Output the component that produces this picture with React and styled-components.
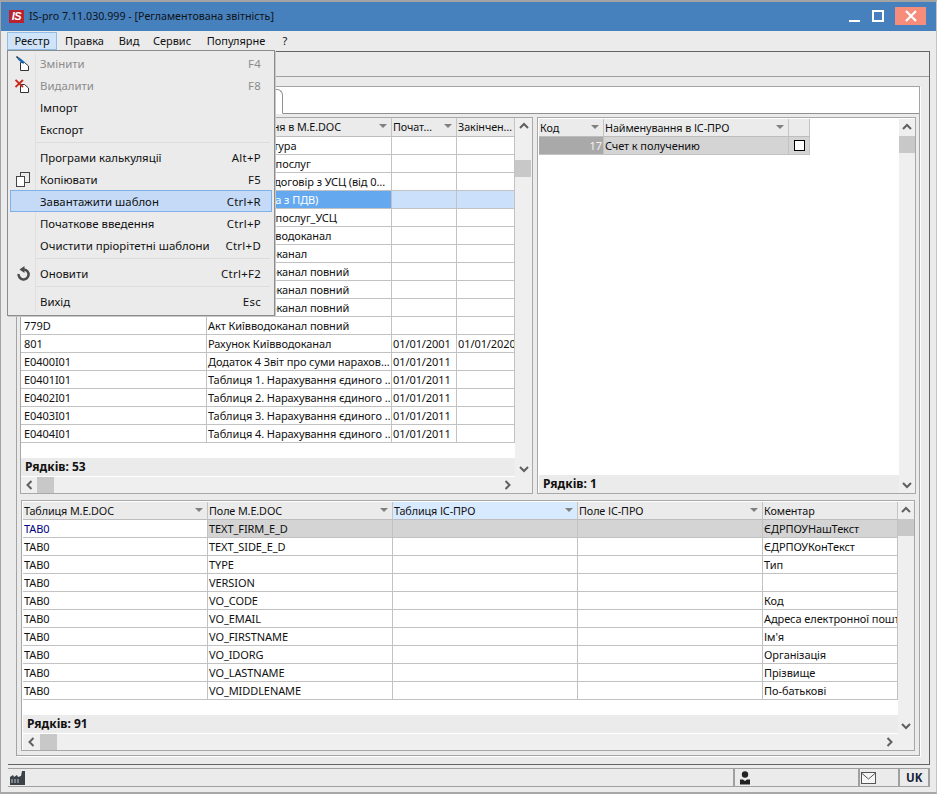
import React from "react";
import styled, { createGlobalStyle } from "styled-components";

const Global = createGlobalStyle`
  html, body { margin: 0; padding: 0; background: #ebebeb; }
  * { box-sizing: border-box; }
  body { font-family: "Noto Sans", "DejaVu Sans", sans-serif; font-size: 11px; color: #111; }
`;

const Window = styled.div`
  width: 937px; height: 794px; background: #ebebeb; overflow: hidden;
  border-top: 2px solid #a3a3a3; border-left: 1px solid #a3a3a3; border-right: 1px solid #c4c4c4; border-bottom: 2px solid #a8a8a8;
  display: flex; flex-direction: column;
`;
const TitleBar = styled.header`
  height: 29px; background: #4681bd; display: flex; align-items: center; padding: 0 10px 1px 8px; flex: none;
`;
const Logo = styled.span`
  width: 15px; height: 13px; background: #b9222e; color: #fff; font: italic 700 11px "Liberation Sans", sans-serif;
  display: flex; align-items: center; justify-content: center; letter-spacing: -0.5px;
`;
const TitleText = styled.span`
  margin-left: 5px; color: #10131a; flex: 1; font-size: 10.7px;
`;
const WinButton = styled.button`
  border: 0; padding: 0; background: ${p => p.$bg || "transparent"}; width: ${p => p.$w}px; height: 18px; margin-left: ${p => p.$ml}px;
  display: flex; align-items: center; justify-content: center;
`;
const MenuBar = styled.nav`
  height: 20px; display: flex; padding: 1px 0 1px 6px; flex: none; position: relative; z-index: 5;
`;
const MenuTitle = styled.div`
  position: relative; height: 18px; line-height: 15px; flex: none; text-align: center;
  width: ${p => p.$w}px;
  border: 1px solid ${p => p.$active ? "#90bde6" : "transparent"};
  background: ${p => p.$active ? "#cfe4f8" : "transparent"};
`;
const Dropdown = styled.div`
  position: absolute; left: -1px; top: 17px; width: 268px; height: 266px; background: #ebebeb; text-align: left;
  border: 1px solid #8c8c8c; padding: 1px 2px 3px 2px; box-shadow: 1px 1px 0 #c8c8c8;
`;
const Gutter = styled.i`
  position: absolute; left: 27px; top: 2px; bottom: 3px; width: 1px; background: #e0e0e0;
`;
const Item = styled.div`
  position: relative; height: 22px; display: flex; align-items: center; padding: 1px 10px 0 29px; justify-content: space-between;
  color: ${p => p.$disabled ? "#8b8b8b" : "#111"};
  background: ${p => p.$hl ? "#c4daf6" : "transparent"};
  border: 1px solid ${p => p.$hl ? "#7fb1e8" : "transparent"};
  font-size: 11.4px;
`;
const ShortKey = styled.span`
  letter-spacing: 0.3px;
`;
const ItemIcon = styled.span`
  position: absolute; left: 4px; top: 2px; width: 17px; height: 17px; display: flex; align-items: center; justify-content: center;
`;
const Separator = styled.div`
  height: 6px; margin-left: 26px; position: relative;
  &::after { content: ""; position: absolute; left: 0; right: 2px; top: 2px; height: 1px; background: #dcdcdc; }
`;
const Frame = styled.main`
  margin-left: 7px; width: 922px; height: 714px; border-top: 1px solid #646464; border-right: 1px solid #646464; border-bottom: 1px solid #646464; flex: none;
`;
const Toolbar = styled.div`
  height: 25px; border-bottom: 1px solid #a0a0a0;
`;
const Page = styled.section`
  margin: 9px 0 0 8px; width: 904px; height: 670px; border: 1px solid #a4a4a4; box-shadow: 1px 1px 0 #fff;
  display: flex; flex-direction: column;
`;
const TabStrip = styled.div`
  height: 27px; background: #fff; border-bottom: 1px solid #909090; flex: none; padding-top: 2px;
`;
const Tab = styled.div`
  width: 266px; height: 25px; background: #fff; border: 1px solid #909090; border-bottom: 1px solid #fff; border-left: 0; border-top-right-radius: 6px;
`;
const Body = styled.div`
  padding: 3px 3px 4px; display: flex; flex-direction: column; gap: 6px;
`;
const TopRow = styled.div`
  display: flex; gap: 4px;
`;
const Panel = styled.div`
  width: ${p => p.$w}px; height: ${p => p.$h}px; border: 1px solid #a8a8a8; padding: ${p => p.$pad || "0"}; margin-left: ${p => p.$ml || 0}px;
  background: #fff; display: flex; flex-direction: column; flex: none;
`;
const PanelMain = styled.div`
  flex: 1; display: flex; min-height: 0;
`;
const TableCol = styled.div`
  flex: 1; min-width: 0; display: flex; flex-direction: column;
`;
const Grow = styled.div`flex: 1; background: ${p => p.$clear ? "transparent" : "#fff"};`;
const Row = styled.div`
  display: flex; height: ${p => p.$h || 18}px; flex: none; overflow: hidden;
`;
const HeadCell = styled.div`
  width: ${p => p.$w}px; flex: none; position: relative; background: ${p => p.$hot ? "#d8eaff" : "#ebebeb"};
  border-right: 1px solid #c4c4c4; border-bottom: 1px solid #bdbdbd; padding: 0 1px; line-height: 18px; white-space: nowrap; overflow: hidden;
  font-size: 10.8px; letter-spacing: -0.1px;
`;
const SortArrow = styled.i`
  position: absolute; right: 4px; top: 6px; width: 0; height: 0;
  border-left: 4px solid transparent; border-right: 4px solid transparent; border-top: 4px solid #808080;
`;
const Cell = styled.div`
  width: ${p => p.$w}px; flex: none; padding: 0 1px 0 ${p => p.$pl || 1}px; line-height: 18px; white-space: nowrap; overflow: hidden;
  border-right: 1px solid #c2c2c2; border-bottom: 1px solid #c2c2c2; letter-spacing: -0.08px;
  text-align: ${p => p.$right ? "right" : "left"};
  background: ${p => ({ sel: "#64a9f0", selLight: "#cbe1fb", cur: "#d4d4d4", key: "#a9a9a9" }[p.$tone] || "#fff")};
  color: ${p => ({ sel: "#fff", key: "#f2f2f2", navy: "#000080" }[p.$tone] || "#111")};
`;
const CheckCell = styled(Cell)`
  display: flex; align-items: center; justify-content: center; padding: 0;
`;
const Check = styled.span`
  width: 11px; height: 11px; border: 1px solid #000; background: #fff; display: block;
`;
const Footer = styled.div`
  height: 18px; flex: none; background: #ebebeb; font-weight: 700; font-size: 12px; line-height: 18px; padding-left: ${p => p.$pl}px;
  margin-bottom: ${p => p.$mb || 0}px; color: #111;
`;
const VScroll = styled.div`
  width: ${p => p.$w}px; flex: none; background: #efefef; display: flex; flex-direction: column; align-items: stretch;
`;
const Thumb = styled.div`
  height: 17px; background: #c8c8c8; margin-top: ${p => p.$top}px; margin-right: ${p => p.$mr || 0}px;
`;
const ArrowBox = styled.div`
  height: 17px; flex: none; display: flex; align-items: center; justify-content: center;
`;
const HScroll = styled.div`
  height: 16px; flex: none; background: #efefef; display: flex; align-items: center; padding-left: ${p => p.$pl}px; padding-right: ${p => p.$pr}px;
`;
const HThumb = styled.div`
  width: 17px; height: 16px; background: #c8c8c8; margin-left: ${p => p.$ml}px;
`;
const StatusBar = styled.footer`
  margin: 3px 0 0 7px; width: 922px; height: 19px; display: flex; border-top: 1px solid #a0a0a0; border-bottom: 1px solid #a0a0a0; flex: none;
`;
const StatusCell = styled.div`
  width: ${p => p.$w ? `${p.$w}px` : "auto"}; flex: ${p => p.$w ? "none" : 1}; display: flex; align-items: center; padding-left: ${p => p.$pl || 0}px;
  border-right: ${p => p.$w ? "2px solid #a0a0a0" : "0"}; border-left: ${p => p.$bl ? "2px solid #a0a0a0" : "0"};
`;
const Lang = styled.b`
  font: 700 11.5px "Noto Sans", sans-serif; color: #16233a;
`;

const Chevron = ({ dir }) => {
  const d = { up: "M1 6 L5 2 L9 6", down: "M1 3 L5 7 L9 3", left: "M6.5 1 L2.5 5 L6.5 9", right: "M3.5 1 L7.5 5 L3.5 9" }[dir];
  return <svg width="10" height="10" viewBox="0 0 10 10"><path d={d} fill="none" stroke="#606060" strokeWidth="2" /></svg>;
};
const VBar = ({ w, top, mr }) => (
  <VScroll $w={w}>
    <ArrowBox><Chevron dir="up" /></ArrowBox>
    <Thumb $top={top} $mr={mr} />
    <Grow $clear />
    <ArrowBox><Chevron dir="down" /></ArrowBox>
  </VScroll>
);
const HBar = ({ pl, ml, pr }) => (
  <HScroll $pl={pl} $pr={pr}>
    <Chevron dir="left" />
    <HThumb $ml={ml} />
    <Grow $clear />
    <Chevron dir="right" />
  </HScroll>
);

const EditIcon = () => (
  <svg width="17" height="17" viewBox="0 0 17 17">
    <path d="M5.5 7.5 H9.5 L13.5 11 V15.5 H5.5 Z" fill="#fff" stroke="#333" />
    <path d="M3.5 3.5 L9 8" stroke="#1767b3" strokeWidth="2.4" />
    <path d="M1.5 1.5 L3.5 3.5" stroke="#123" strokeWidth="1.4" />
  </svg>
);
const DeleteIcon = () => (
  <svg width="17" height="17" viewBox="0 0 17 17">
    <path d="M5.5 7.5 H9.5 L13.5 11 V15.5 H5.5 Z" fill="#fff" stroke="#333" />
    <path d="M0.5 3 L8 10 M8 3 L0.5 10" stroke="#c8281e" strokeWidth="1.8" />
  </svg>
);
const CopyIcon = () => (
  <svg width="17" height="17" viewBox="0 0 17 17">
    <rect x="5.5" y="1.5" width="9" height="10" fill="#ebebeb" stroke="#444" />
    <rect x="1.5" y="5.5" width="8" height="10" fill="#fff" stroke="#444" />
  </svg>
);
const RefreshIcon = () => (
  <svg width="15" height="15" viewBox="0 0 15 15">
    <path d="M8 3.5 A5 5 0 1 1 2.6 8" fill="none" stroke="#4c4c4c" strokeWidth="2.6" />
    <path d="M8.5 0 V7 L3.5 3.5 Z" fill="#4c4c4c" />
  </svg>
);
const FactoryIcon = () => (
  <svg width="17" height="16" viewBox="0 0 17 16">
    <path d="M1 15 V7 L4 5 L5 7 L8 5 L9 7 L12 6 L13 1 H16 V15 Z" fill="#3a4148" />
    <path d="M3 9 V13 M6 9 V13 M9 9 V13" stroke="#c4c4c4" />
  </svg>
);
const PersonIcon = () => (
  <svg width="12" height="14" viewBox="0 0 12 14">
    <circle cx="6" cy="3.5" r="3.2" fill="#222" />
    <path d="M1 13.5 V8.5 H4 L6 10 L8 8.5 H11 V13.5 Z" fill="#222" />
  </svg>
);
const MailIcon = () => (
  <svg width="15" height="12" viewBox="0 0 15 12">
    <rect x="0.5" y="0.5" width="14" height="11" fill="#f6f6f6" stroke="#555" />
    <path d="M0.5 1 L7.5 7 L14.5 1" fill="none" stroke="#555" />
  </svg>
);

const menu = [
  { t: "Змінити", k: "F4", d: 1, ic: <EditIcon /> },
  { t: "Видалити", k: "F8", d: 1, ic: <DeleteIcon /> },
  { t: "Імпорт" }, { t: "Експорт" }, { sep: 1 },
  { t: "Програми калькуляції", k: "Alt+P" },
  { t: "Копіювати", k: "F5", ic: <CopyIcon /> },
  { t: "Завантажити шаблон", k: "Ctrl+R", hl: 1 },
  { t: "Початкове введення", k: "Ctrl+P" },
  { t: "Очистити пріорітетні шаблони", k: "Ctrl+D" }, { sep: 1 },
  { t: "Оновити", k: "Ctrl+F2", ic: <RefreshIcon /> }, { sep: 1 },
  { t: "Вихід", k: "Esc" },
];

const menuTitles = [["Реєстр", 50], ["Правка", 55], ["Вид", 34], ["Сервис", 52], ["Популярне", 76], ["?", 22]];

const leftCols = [186, 185, 65, 58];
const leftRows = [
  ["500", "Рахунок-фактура"], ["501", "Акт наданих послуг"], ["502", "Додатковий договір з УСЦ (від 0…"],
  ["503", "Рахунок (сума з ПДВ)", "", "", 1], ["504", "Акт наданих послуг_УСЦ"], ["775", "Рахунок Київводоканал"],
  ["776", "Акт Київводоканал"], ["777", "Акт Київводоканал повний"], ["778", "Акт Київводоканал повний"],
  ["779", "Акт Київводоканал повний"], ["779D", "Акт Київводоканал повний"],
  ["801", "Рахунок Київводоканал", "01/01/2001", "01/01/2020"],
  ["E0400I01", "Додаток 4 Звіт про суми нарахов…", "01/01/2011"],
  ["E0401I01", "Таблиця 1. Нарахування єдиного …", "01/01/2011"],
  ["E0402I01", "Таблиця 2. Нарахування єдиного …", "01/01/2011"],
  ["E0403I01", "Таблиця 3. Нарахування єдиного …", "01/01/2011"],
  ["E0404I01", "Таблиця 4. Нарахування єдиного …", "01/01/2011"],
];
const bottomCols = [185, 185, 185, 185, 135];
const bottomRows = [
  ["TEXT_FIRM_E_D", "ЄДРПОУНашТекст"], ["TEXT_SIDE_E_D", "ЄДРПОУКонТекст"], ["TYPE", "Тип"], ["VERSION", ""],
  ["VO_CODE", "Код"], ["VO_EMAIL", "Адреса електронної пошти"], ["VO_FIRSTNAME", "Ім'я"], ["VO_IDORG", "Організація"],
  ["VO_LASTNAME", "Прізвище"], ["VO_MIDDLENAME", "По-батькові"],
];

export default function App() {
  return (
    <>
      <Global />
      <Window>
        <TitleBar>
          <Logo>IS</Logo>
          <TitleText>IS-pro 7.11.030.999 - [Регламентована звітність]</TitleText>
          <WinButton $w={12} $ml={0}>
            <svg width="12" height="18" viewBox="0 0 12 18"><rect x="0" y="13" width="11" height="2" fill="#fff" /></svg>
          </WinButton>
          <WinButton $w={12} $ml={11}>
            <svg width="12" height="12" viewBox="0 0 12 12"><rect x="1" y="1" width="10" height="10" fill="none" stroke="#fff" strokeWidth="2" /></svg>
          </WinButton>
          <WinButton $w={31} $ml={11} $bg="#f68d7b">
            <svg width="12" height="12" viewBox="0 0 12 12"><path d="M1 1 L11 11 M11 1 L1 11" stroke="#fff" strokeWidth="2.2" /></svg>
          </WinButton>
        </TitleBar>
        <MenuBar>
          {menuTitles.map(([t, w], i) => (
            <MenuTitle key={t} $w={w} $active={i === 0}>
              {t}
              {i === 0 && (
                <Dropdown>
                  <Gutter />
                  {menu.map((m, n) => m.sep ? <Separator key={n} /> : (
                    <Item key={n} $disabled={m.d} $hl={m.hl}>
                      {m.ic && <ItemIcon>{m.ic}</ItemIcon>}
                      <span>{m.t}</span><ShortKey>{m.k}</ShortKey>
                    </Item>
                  ))}
                </Dropdown>
              )}
            </MenuTitle>
          ))}
        </MenuBar>
        <Frame>
          <Toolbar />
          <Page>
            <TabStrip><Tab /></TabStrip>
            <Body>
              <TopRow>
                <Panel $w={513} $h={377}>
                  <PanelMain>
                    <TableCol>
                      <Row $h={19}>
                        <HeadCell $w={186}>Код<SortArrow /></HeadCell>
                        <HeadCell $w={185}>Найменування в М.Е.DOC<SortArrow /></HeadCell>
                        <HeadCell $w={65}>Почат…<SortArrow /></HeadCell>
                        <HeadCell $w={58}>Закінчен…</HeadCell>
                      </Row>
                      {leftRows.map((r, i) => (
                        <Row key={i}>
                          {leftCols.map((w, c) => (
                            <Cell key={c} $w={w} $pl={c === 0 ? 3 : 1} $tone={r[4] ? (c < 2 ? "sel" : "selLight") : undefined}>{r[c]}</Cell>
                          ))}
                        </Row>
                      ))}
                      <Grow />
                      <Footer $pl={4} $mb={1}>Рядків: 53</Footer>
                    </TableCol>
                    <VBar w={17} top={25} mr={1} />
                  </PanelMain>
                  <HBar pl={4} ml={2} pr={20} />
                </Panel>
                <Panel $w={379} $h={377} $pad="1px 0 0 1px">
                  <PanelMain>
                    <TableCol>
                      <Row>
                        <HeadCell $w={65}>Код<SortArrow /></HeadCell>
                        <HeadCell $w={185}>Найменування в ІС-ПРО<SortArrow /></HeadCell>
                        <HeadCell $w={21} />
                      </Row>
                      <Row>
                        <Cell $w={65} $right $tone="key">17</Cell>
                        <Cell $w={185} $tone="cur">Счет к получению</Cell>
                        <CheckCell $w={21} $tone="cur"><Check /></CheckCell>
                      </Row>
                      <Grow />
                      <Footer $pl={4}>Рядків: 1</Footer>
                    </TableCol>
                    <VBar w={16} top={0} />
                  </PanelMain>
                </Panel>
              </TopRow>
              <Panel $w={894} $h={251} $ml={1} $pad="1px 0 0 1px">
                <PanelMain>
                  <TableCol>
                    <Row>
                      <HeadCell $w={185}>Таблиця М.Е.DOC<SortArrow /></HeadCell>
                      <HeadCell $w={185}>Поле М.Е.DOC<SortArrow /></HeadCell>
                      <HeadCell $w={185} $hot>Таблиця ІС-ПРО<SortArrow /></HeadCell>
                      <HeadCell $w={185}>Поле ІС-ПРО<SortArrow /></HeadCell>
                      <HeadCell $w={135}>Коментар</HeadCell>
                    </Row>
                    {bottomRows.map((r, i) => {
                      const vals = ["TAB0", r[0], "", "", r[1]];
                      return (
                        <Row key={i}>
                          {bottomCols.map((w, c) => (
                            <Cell key={c} $w={w} $tone={i === 0 ? (c === 0 ? "navy" : "cur") : undefined}>{vals[c]}</Cell>
                          ))}
                        </Row>
                      );
                    })}
                    <Grow />
                    <Footer $pl={4} $mb={1}>Рядків: 91</Footer>
                  </TableCol>
                  <VBar w={16} top={0} />
                </PanelMain>
                <HBar pl={4} ml={3} pr={20} />
              </Panel>
            </Body>
          </Page>
        </Frame>
        <StatusBar>
          <StatusCell $pl={1}><FactoryIcon /></StatusCell>
          <StatusCell $w={127} $pl={4} $bl><PersonIcon /></StatusCell>
          <StatusCell $w={40} $pl={1}><MailIcon /></StatusCell>
          <StatusCell $w={30} $pl={6}><Lang>UK</Lang></StatusCell>
        </StatusBar>
      </Window>
    </>
  );
}
